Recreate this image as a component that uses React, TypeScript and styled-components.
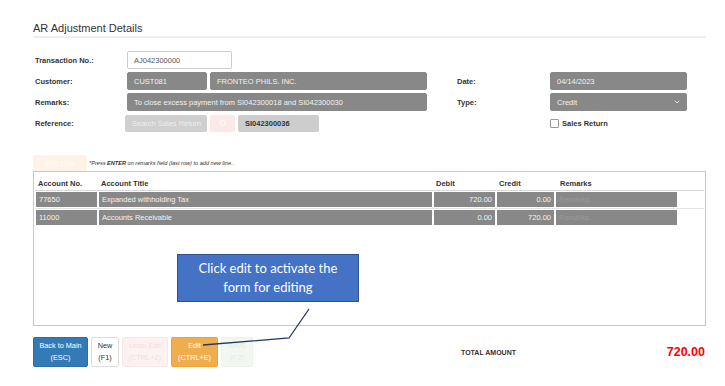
import React from "react";
import styled, { createGlobalStyle } from "styled-components";
import { ChevronDown, Search } from "lucide-react";

const GlobalStyle = createGlobalStyle`
  html, body {
    margin: 0;
    padding: 0;
    background: #fff;
  }
  body {
    font-family: "Liberation Sans", Arial, sans-serif;
    color: #333;
  }
`;

interface ILine {
  account: string;
  title: string;
  debit: string;
  credit: string;
}

const lines: ILine[] = [
  { account: "77650", title: "Expanded withholding Tax", debit: "720.00", credit: "0.00" },
  { account: "11000", title: "Accounts Receivable", debit: "0.00", credit: "720.00" },
];

function App() {
  return (
    <Page>
      <GlobalStyle />
      <Title>AR Adjustment Details</Title>

      <FormGrid>
        <Label>Transaction No.:</Label>
        <Field>
          <Input $variant="white" $width={105}>AJ042300000</Input>
        </Field>
        <span />
        <span />
        <span />

        <Label>Customer:</Label>
        <Field>
          <Input $width={80}>CUST081</Input>
          <Input $width={217}>FRONTEO PHILS. INC.</Input>
        </Field>
        <span />
        <Label>Date:</Label>
        <Input $width={137}>04/14/2023</Input>

        <Label>Remarks:</Label>
        <Input $width={300}>To close excess payment from SI042300018 and SI042300030</Input>
        <span />
        <Label>Type:</Label>
        <Select>
          Credit
          <ChevronDown size={8} strokeWidth={2.5} color="#f4f4f4" />
        </Select>

        <Label>Reference:</Label>
        <Field $offset={-2}>
          <Input $variant="faded" $width={82}>Search Sales Return</Input>
          <SearchButton>
            <Search size={8} strokeWidth={2.5} color="#ffffff" />
          </SearchButton>
          <Input $variant="light" $width={81}>SI042300036</Input>
        </Field>
        <span />
        <span />
        <CheckRow>
          <CheckBox />
          Sales Return
        </CheckRow>
      </FormGrid>

      <ToolRow>
        <AddLine>Add Line</AddLine>
        <Note>
          *Press <b>ENTER</b> on remarks field (last row) to add new line..
        </Note>
      </ToolRow>

      <TableBox>
        <HeadRow>
          <HeadCell $width={63}>Account No.</HeadCell>
          <HeadCell $width={335}>Account Title</HeadCell>
          <HeadCell $width={63}>Debit</HeadCell>
          <HeadCell $width={61}>Credit</HeadCell>
          <HeadCell $width={121}>Remarks</HeadCell>
        </HeadRow>
        {lines.map((line) => (
          <BodyRow key={line.account}>
            <Cell $width={61}>{line.account}</Cell>
            <Cell $width={333}>{line.title}</Cell>
            <Cell $width={61} $right>{line.debit}</Cell>
            <Cell $width={57} $right>{line.credit}</Cell>
            <Cell $width={121} $placeholder>Remarks...</Cell>
          </BodyRow>
        ))}
      </TableBox>

      <Footer>
        <Buttons>
          <Button $kind="primary" $width={55}>Back to Main<br />(ESC)</Button>
          <Button $kind="default" $width={28}>New<br />(F1)</Button>
          <Button $kind="danger" $width={46}>Undo Edit<br />(CTRL+Z)</Button>
          <Button $kind="warning" $width={47}>Edit<br />(CTRL+E)</Button>
          <Button $kind="success" $width={32}>SAVE<br />(F2)</Button>
        </Buttons>
        <TotalLabel>TOTAL AMOUNT</TotalLabel>
        <TotalValue>720.00</TotalValue>
      </Footer>

      <Callout>
        Click edit to activate the
        <br />
        form for editing
      </Callout>
      <Connector width="725" height="386" viewBox="0 0 725 386">
        <polyline points="309,309 289,338 203,345" fill="none" stroke="#1f3864" strokeWidth="1.3" />
      </Connector>
    </Page>
  );
}

export default App;

const Page = styled.div`
  position: relative;
  width: 725px;
  height: 386px;
  box-sizing: border-box;
  padding: 22px 19px 0 33px;
  overflow: hidden;
`;

const Title = styled.h1`
  margin: 0;
  padding-bottom: 1px;
  font-size: 11px;
  font-weight: normal;
  line-height: 13px;
  color: #333;
  border-bottom: 2px solid #eee;
`;

const FormGrid = styled.div`
  display: grid;
  grid-template-columns: 94px 300px 28px 95px 137px;
  grid-auto-rows: 18px;
  row-gap: 3px;
  margin-top: 13px;
  align-items: center;
`;

const Label = styled.div`
  padding-left: 2px;
  font-size: 7.5px;
  font-weight: bold;
  color: #333;
`;

const Field = styled.div<{ $offset?: number }>`
  display: flex;
  gap: 3px;
  height: 100%;
  margin-left: ${(p) => p.$offset ?? 0}px;
  align-items: center;
`;

type InputVariant = "grey" | "white" | "faded" | "light";

const inputColors: Record<InputVariant, { bg: string; fg: string; border: string }> = {
  grey: { bg: "#888888", fg: "#f2f2f2", border: "#888888" },
  white: { bg: "#ffffff", fg: "#555555", border: "#cccccc" },
  faded: { bg: "#cfcfcf", fg: "#eeeeee", border: "#cfcfcf" },
  light: { bg: "#cdcdcd", fg: "#333333", border: "#cdcdcd" },
};

const Input = styled.div<{ $variant?: InputVariant; $width: number }>`
  display: flex;
  align-items: center;
  box-sizing: border-box;
  width: ${(p) => p.$width}px;
  height: 18px;
  padding-left: 6px;
  border: 1px solid ${(p) => inputColors[p.$variant ?? "grey"].border};
  border-radius: 2px;
  background: ${(p) => inputColors[p.$variant ?? "grey"].bg};
  color: ${(p) => inputColors[p.$variant ?? "grey"].fg};
  font-size: 7.5px;
  font-weight: ${(p) => (p.$variant === "light" ? "bold" : "normal")};
  white-space: nowrap;
  overflow: hidden;
  ${(p) => (p.$variant === "faded" || p.$variant === "light" ? "height: 17px;" : "")}
`;

const Select = styled(Input).attrs({ $width: 137 })`
  justify-content: space-between;
  padding-right: 5px;
`;

const SearchButton = styled.div`
  display: flex;
  align-items: center;
  justify-content: center;
  width: 25px;
  height: 17px;
  border-radius: 2px;
  background: #fbe8e8;
`;

const CheckRow = styled.label`
  display: flex;
  align-items: center;
  gap: 3px;
  font-size: 7.5px;
  font-weight: bold;
  color: #333;
`;

const CheckBox = styled.span`
  width: 7px;
  height: 7px;
  border: 1px solid #999;
  border-radius: 1px;
  background: #fff;
`;

const ToolRow = styled.div`
  display: flex;
  align-items: center;
  gap: 2px;
  margin-top: 23px;
  height: 16px;
`;

const AddLine = styled.div`
  width: 54px;
  height: 16px;
  display: flex;
  align-items: center;
  justify-content: center;
  border-radius: 2px 2px 0 0;
  background: #fdf3e7;
  color: #ffffff;
  font-size: 7.5px;
`;

const Note = styled.div`
  font-size: 5.6px;
  font-style: italic;
  color: #333;
`;

const TableBox = styled.div`
  box-sizing: border-box;
  height: 155px;
  border: 1px solid #c8c8c8;
  padding: 0 1px;
`;

const HeadRow = styled.div`
  display: flex;
  box-sizing: border-box;
  height: 19px;
  padding-top: 4px;
  align-items: center;
  border-bottom: 1px solid #d8d8d8;
`;

const HeadCell = styled.div<{ $width: number }>`
  width: ${(p) => p.$width}px;
  padding-left: 3px;
  box-sizing: border-box;
  font-size: 7.5px;
  font-weight: bold;
  color: #333;
`;

const BodyRow = styled.div`
  display: flex;
  gap: 2px;
  padding: 1px 0 1px 1px;
  border-bottom: 1px solid #e4e4e4;
  &:last-child {
    border-bottom: none;
  }
`;

const Cell = styled.div<{ $width: number; $right?: boolean; $placeholder?: boolean }>`
  box-sizing: border-box;
  width: ${(p) => p.$width}px;
  height: 15px;
  display: flex;
  align-items: center;
  justify-content: ${(p) => (p.$right ? "flex-end" : "flex-start")};
  padding: 0 3px;
  background: #888888;
  color: ${(p) => (p.$placeholder ? "#9a9a9a" : "#f2f2f2")};
  font-size: 7.5px;
  white-space: nowrap;
`;

const Footer = styled.div`
  display: flex;
  align-items: center;
  margin-top: 11px;
`;

const Buttons = styled.div`
  display: flex;
  gap: 3px;
`;

type ButtonKind = "primary" | "default" | "danger" | "warning" | "success";

const buttonColors: Record<ButtonKind, { bg: string; fg: string; border: string }> = {
  primary: { bg: "#337ab7", fg: "#ffffff", border: "#2e6da4" },
  default: { bg: "#ffffff", fg: "#333333", border: "#dddddd" },
  danger: { bg: "#fdf2f2", fg: "#f6dada", border: "#fbe6e6" },
  warning: { bg: "#f0ad4e", fg: "#ffffff", border: "#eea236" },
  success: { bg: "#f1f8f1", fg: "#e0eee0", border: "#eaf4ea" },
};

const Button = styled.div<{ $kind: ButtonKind; $width: number }>`
  box-sizing: border-box;
  width: ${(p) => p.$width}px;
  height: 30px;
  display: flex;
  align-items: center;
  justify-content: center;
  text-align: center;
  border: 1px solid ${(p) => buttonColors[p.$kind].border};
  border-radius: 2px;
  background: ${(p) => buttonColors[p.$kind].bg};
  color: ${(p) => buttonColors[p.$kind].fg};
  font-size: 7.3px;
  line-height: 12px;
  white-space: nowrap;
`;

const TotalLabel = styled.div`
  margin-left: 208px;
  font-size: 7px;
  font-weight: bold;
  color: #333;
`;

const TotalValue = styled.div`
  margin-left: auto;
  margin-right: 1px;
  font-size: 12.5px;
  font-weight: bold;
  color: #ff0000;
`;

const Callout = styled.div`
  position: absolute;
  left: 177px;
  top: 254px;
  width: 182px;
  height: 48px;
  box-sizing: border-box;
  display: flex;
  align-items: center;
  justify-content: center;
  text-align: center;
  background: #4472c4;
  border: 1px solid #2f528f;
  color: #ffffff;
  font-family: Lato, "Open Sans", sans-serif;
  font-size: 13px;
  line-height: 19px;
`;

const Connector = styled.svg`
  position: absolute;
  left: 0;
  top: 0;
  pointer-events: none;
`;
